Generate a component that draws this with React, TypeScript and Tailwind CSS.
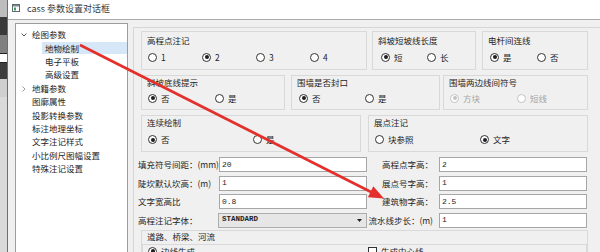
import React from "react";

const cjk = "font-['Noto_Sans_CJK_SC','Noto_Sans',sans-serif]";
const mono = "font-['Liberation_Mono','DejaVu_Sans_Mono',monospace]";

function Radio({
  label,
  checked,
  disabled,
  className,
}: {
  label: string;
  checked?: boolean;
  disabled?: boolean;
  className?: string;
}) {
  return (
    <div className={`flex items-center gap-[4px] h-[11px] shrink-0 ${className ?? ""}`}>
      <span
        className={`w-[9px] h-[9px] rounded-full border bg-white flex items-center justify-center ${
          disabled ? "border-[#c2c2c2]" : "border-[#333333]"
        }`}
      >
        {checked && (
          <span className={`w-[4px] h-[4px] rounded-full ${disabled ? "bg-[#c2c2c2]" : "bg-[#1e1e1e]"}`} />
        )}
      </span>
      <span className={`leading-[11px] ${disabled ? "text-[#a3a3a3]" : ""}`}>{label}</span>
    </div>
  );
}

function GroupBox({
  title,
  className,
  labelClass,
  rowClass,
  children,
}: {
  title: string;
  className?: string;
  labelClass?: string;
  rowClass?: string;
  children: React.ReactNode;
}) {
  return (
    <div className={`border border-[#d9d9d9] flex flex-col ${className ?? ""}`}>
      <div className={`pl-[5px] leading-[11px] h-[11px] ${labelClass ?? ""}`}>{title}</div>
      <div className={`flex pl-[6px] ${rowClass ?? ""}`}>{children}</div>
    </div>
  );
}

function Field({ label, value, right }: { label: string; value: string; right?: boolean }) {
  return (
    <>
      <div className={`leading-[11px] ${right ? "w-[72px] text-right pr-[6px]" : "w-[81px]"}`}>{label}</div>
      <div
        className={`w-[148px] h-[15px] bg-white border border-[#a6a6a6] flex items-center pl-[2px] text-[8px] ${mono}`}
      >
        {value}
      </div>
    </>
  );
}

const tree: { text: string; level: number; chevron?: "open" | "closed"; selected?: boolean }[] = [
  { text: "绘图参数", level: 0, chevron: "open" },
  { text: "地物绘制", level: 1, selected: true },
  { text: "电子平板", level: 1 },
  { text: "高级设置", level: 1 },
  { text: "地籍参数", level: 0, chevron: "closed" },
  { text: "图廓属性", level: 0 },
  { text: "投影转换参数", level: 0 },
  { text: "标注地理坐标", level: 0 },
  { text: "文字注记样式", level: 0 },
  { text: "小比例尺图幅设置", level: 0 },
  { text: "特殊注记设置", level: 0 },
];

export default function App() {
  return (
    <div className={`relative w-[600px] h-[252px] overflow-hidden bg-[#f0f0f0] flex text-[8.5px] text-[#1e1e1e] ${cjk}`}>
      {/* desktop behind the window */}
      <div className="w-[8px] h-full flex flex-col border-r border-[#6e6e6e] shrink-0">
        <div className="h-[17px] bg-[#bdbdbd]" />
        <div className="h-[18px] bg-[#3a3a3a]" />
        <div className="h-[18px] bg-[#808080]" />
        <div className="h-[10px] bg-white border-y border-[#222222]" />
        <div className="h-[16px] bg-[#3d3d3d]" />
        <div className="h-[18px] bg-[#cfcfcf]" />
        <div className="flex-1 bg-[#dadada]" />
      </div>

      <div className="flex-1 flex flex-col min-w-0">
        {/* title bar */}
        <div className="h-[20px] bg-white border-b border-[#a9a9a9] flex items-start pt-[3px] pl-[4px] shrink-0">
          <svg width="8" height="8" viewBox="0 0 8 8" className="mt-[1px]">
            <rect x="0.5" y="0.5" width="7" height="7" fill="#ffffff" stroke="#5f6b73" />
            <rect x="1" y="1" width="6" height="1.5" fill="#7a8a94" />
            <rect x="2" y="3.5" width="2" height="3" fill="#3c9a5a" />
          </svg>
          <span className="ml-[7px] text-[9px] leading-[12px] text-[#3a3a3a]">cass 参数设置对话框</span>
        </div>

        <div className="flex-1 flex min-h-0">
          {/* tree */}
          <div className="ml-[7px] mt-[3px] w-[113px] bg-white border border-b-0 border-[#9c9c9c] pt-[4px] shrink-0">
            {tree.map((t) => (
              <div key={t.text} className="h-[13.4px] flex items-center relative">
                {t.chevron === "open" && (
                  <svg width="6" height="4" viewBox="0 0 6 4" className="absolute left-[5px] top-[5px]">
                    <path d="M0.5 0.5 L3 3 L5.5 0.5" fill="none" stroke="#555" strokeWidth="1" />
                  </svg>
                )}
                {t.chevron === "closed" && (
                  <svg width="4" height="6" viewBox="0 0 4 6" className="absolute left-[6px] top-[4px]">
                    <path d="M0.5 0.5 L3 3 L0.5 5.5" fill="none" stroke="#a0a0a0" strokeWidth="1" />
                  </svg>
                )}
                {t.level === 0 ? (
                  <span className="ml-[16px] leading-[11px]">{t.text}</span>
                ) : (
                  <span
                    className={`ml-[26px] flex-1 h-[12px] pl-[3px] flex items-center leading-[11px] ${
                      t.selected ? "bg-[#d6e7f8]" : ""
                    }`}
                  >
                    {t.text}
                  </span>
                )}
              </div>
            ))}
          </div>

          {/* settings panel */}
          <div className="flex-1 ml-[5px] mt-[7px] border-l border-t border-[#d6d6d6] pl-[7px] pt-[3px] pr-[12px] flex flex-col min-w-0">
            <div className="flex">
              <GroupBox title="高程点注记" className="w-[226px] h-[39px]" labelClass="mt-[3px]" rowClass="mt-[5.5px]">
                <Radio label="1" className="w-[54px]" />
                <Radio label="2" checked className="w-[54px]" />
                <Radio label="3" className="w-[54px]" />
                <Radio label="4" className="w-[54px]" />
              </GroupBox>
              <GroupBox title="斜坡短坡线长度" className="ml-[5px] w-[104px] h-[39px]" labelClass="mt-[3px]" rowClass="mt-[5.5px] pl-[8px]">
                <Radio label="短" checked className="w-[46px]" />
                <Radio label="长" />
              </GroupBox>
              <GroupBox title="电杆间连线" className="ml-[6px] flex-1 h-[39px]" labelClass="mt-[3px]" rowClass="mt-[5.5px] pl-[7px]">
                <Radio label="是" checked className="w-[47px]" />
                <Radio label="否" />
              </GroupBox>
            </div>

            <div className="flex mt-[5px]">
              <GroupBox title="斜坡底线提示" className="w-[144px] h-[35px]" labelClass="mt-[0.5px]" rowClass="mt-[5px]">
                <Radio label="否" checked className="w-[67px]" />
                <Radio label="是" />
              </GroupBox>
              <GroupBox title="围墙是否封口" className="ml-[6px] w-[149px] h-[35px]" labelClass="mt-[0.5px]" rowClass="mt-[5px] pl-[7px]">
                <Radio label="否" checked className="w-[66px]" />
                <Radio label="是" />
              </GroupBox>
              <GroupBox title="围墙两边线间符号" className="ml-[3px] flex-1 h-[35px]" labelClass="mt-[0.5px]" rowClass="mt-[5px] pl-[6px]">
                <Radio label="方块" checked disabled className="w-[67px]" />
                <Radio label="短线" disabled />
              </GroupBox>
            </div>

            <div className="flex mt-[5px]">
              <GroupBox title="连续绘制" className="w-[220px] h-[37px]" labelClass="mt-[1px]" rowClass="mt-[6px]">
                <Radio label="否" checked className="w-[105px]" />
                <Radio label="是" />
              </GroupBox>
              <GroupBox title="展点注记" className="ml-[7px] flex-1 h-[37px]" labelClass="mt-[1px]" rowClass="mt-[6px] pl-[6px]">
                <Radio label="块参照" className="w-[105px]" />
                <Radio label="文字" checked />
              </GroupBox>
            </div>

            <div className="-ml-[3px] mt-[5px] flex flex-col gap-[3.5px]">
              <div className="flex items-center">
                <Field label="填充符号间距：(mm)" value="20" />
                <Field label="高程点字高：" value="2" right />
              </div>
              <div className="flex items-center">
                <Field label="陡坎默认坎高：(m)" value="1" />
                <Field label="展点号字高：" value="1" right />
              </div>
              <div className="flex items-center">
                <Field label="文字宽高比" value="0.8" />
                <Field label="建筑物字高：" value="2.5" right />
              </div>
              <div className="flex items-center">
                <div className="w-[80px] leading-[11px]">高程注记字体：</div>
                <div
                  className={`w-[149px] h-[15px] bg-[#e6e6e6] border border-[#adadad] flex items-center justify-between pl-[3px] pr-[4px] text-[7.5px] font-bold ${mono}`}
                >
                  <span>STANDARD</span>
                  <svg width="5" height="3" viewBox="0 0 5 3">
                    <polygon points="0,0 5,0 2.5,3" fill="#222" />
                  </svg>
                </div>
                <Field label="流水线步长：(m)" value="1" right />
              </div>
            </div>

            <div className="mt-[2px] border border-b-0 border-[#d9d9d9] flex flex-col flex-1">
              <div className="pl-[5px] leading-[11px] h-[11px]">道路、桥梁、河流</div>
              <div className="mt-[2px] border border-b-0 border-[#d9d9d9] flex pl-[5px] pt-[1px] flex-1">
                <Radio label="边线生成" checked className="w-[220px]" />
                <div className="flex items-center gap-[4px] h-[11px]">
                  <span className="w-[9px] h-[9px] border border-[#333333] bg-white" />
                  <span className="leading-[11px]">生成中心线</span>
                </div>
              </div>
            </div>
          </div>
        </div>
      </div>

      {/* red annotation arrow */}
      <svg className="absolute inset-0 pointer-events-none" width="600" height="252" viewBox="0 0 600 252">
        <line x1="80" y1="45" x2="371" y2="192" stroke="#e3302c" strokeWidth="2.6" />
        <polygon points="384,198.5 367.9,197.3 373.3,186.3" fill="#e3302c" />
      </svg>
    </div>
  );
}
